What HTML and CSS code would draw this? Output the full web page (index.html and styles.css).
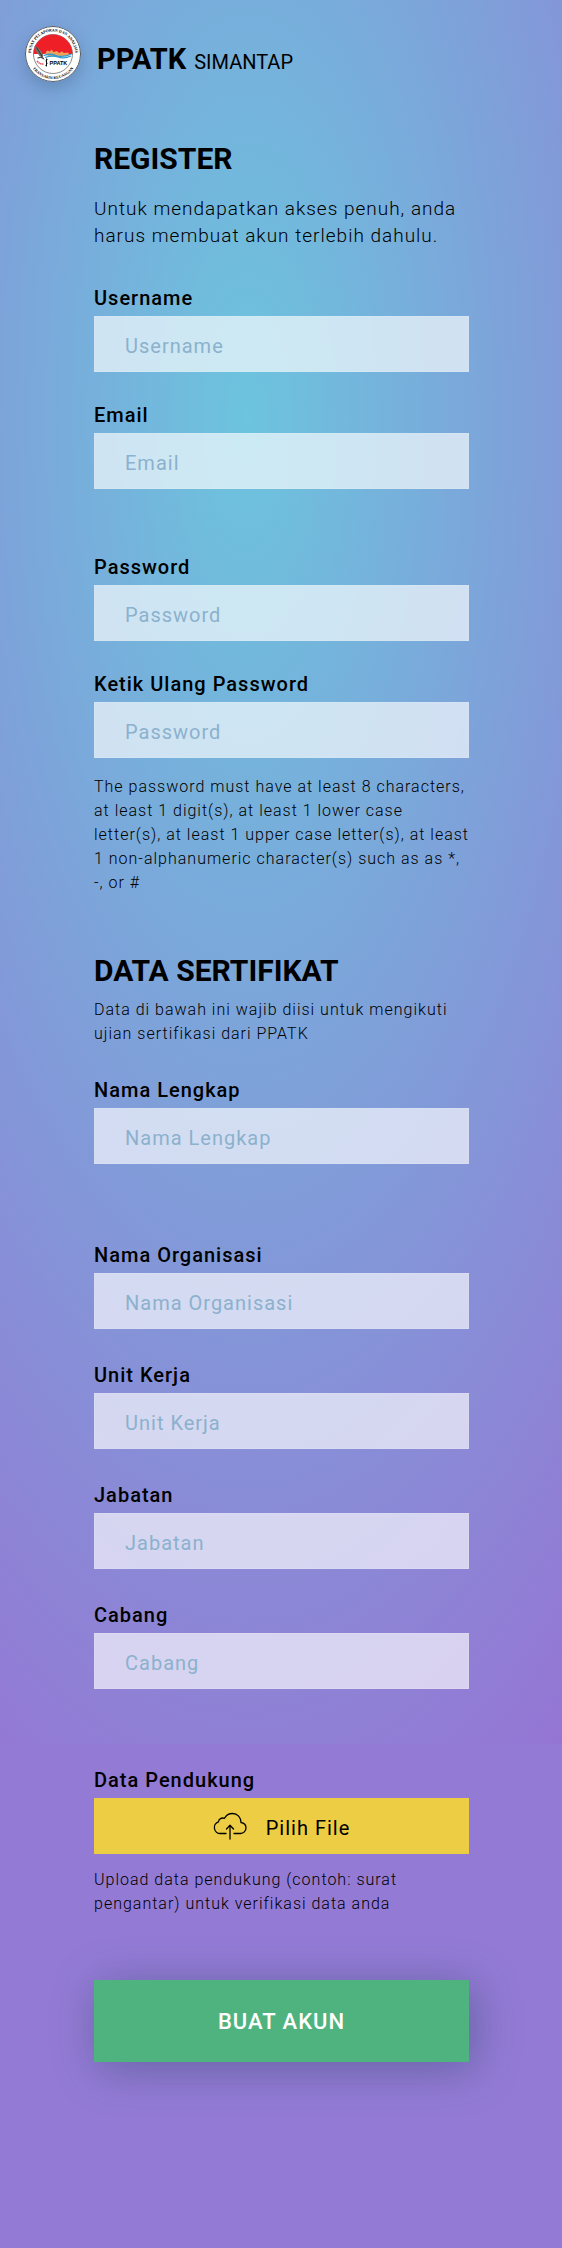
FILE: index.html
```html
<!DOCTYPE html>
<html lang="id">
<head>
<meta charset="utf-8">
<meta name="viewport" content="width=device-width, initial-scale=1">
<title>PPATK SIMANTAP</title>
<link rel="stylesheet" href="styles.css">
</head>
<body>
<header class="header">
  <svg class="logo" viewBox="0 0 112 112" aria-hidden="true">
    <defs>
      <path id="arc-top" d="M15 71 A44 44 0 1 1 97 71"/>
      <path id="arc-bottom" d="M9 73 A50 50 0 0 0 103 73"/>
    </defs>
    <circle cx="56" cy="56" r="55" fill="#fff" stroke="#555" stroke-width="2"/>
    <circle cx="56" cy="56" r="39" fill="#fff" stroke="#666" stroke-width="1.5"/>
    <path d="M17 56 A39 39 0 0 1 95 56 Z" fill="#ee1f27"/>
    <path d="M40 56 l4-7 6 2 3-4 4 5 7-2 4 4 6-3 4 3 8-1 3 5 -20 4 -22-2z" fill="#efa25b"/>
    <path d="M38 59 q12-5 24 0 t31-3 M40 63 q14-5 26-1 t26-2" fill="none" stroke="#329bd1" stroke-width="2.5"/>
    <path d="M19 40 q12 4 18 19 l-3 4 q-12-6-15-23z" fill="#77706b"/>
    <path d="M23 43 l15 24" stroke="#222" stroke-width="1.5"/>
    <path d="M25 64 q7-3 12 1" fill="none" stroke="#222" stroke-width="2"/>
    <path d="M24 70 q6 7 13 6" fill="none" stroke="#e34b52" stroke-width="3" stroke-dasharray="3 1"/>
    <path d="M45 67 q-5 1-2 5 t-2 7 M43 65 v16" fill="none" stroke="#111" stroke-width="2"/>
    <text class="logo-name" x="49" y="78">PPATK</text>
    <text class="logo-ring"><textPath href="#arc-top" startOffset="50%" text-anchor="middle">PUSAT PELAPORAN DAN ANALISIS</textPath></text>
    <text class="logo-ring"><textPath href="#arc-bottom" startOffset="50%" text-anchor="middle">TRANSAKSI KEUANGAN</textPath></text>
  </svg>
  <div class="brand"><strong class="brand-name">PPATK</strong><span class="brand-app">SIMANTAP</span></div>
</header>

<main class="main">
  <form class="form">
    <h1 class="title">REGISTER</h1>
    <p class="intro">Untuk mendapatkan akses penuh, anda harus membuat akun terlebih dahulu.</p>
    <div class="group group-account">
      <div class="field">
        <label class="label" for="username">Username</label>
        <input class="input" id="username" type="text" placeholder="Username">
      </div>
      <div class="field">
        <label class="label" for="email">Email</label>
        <input class="input" id="email" type="email" placeholder="Email">
      </div>
    </div>
    <div class="group group-password">
      <div class="field">
        <label class="label" for="password">Password</label>
        <input class="input" id="password" type="password" placeholder="Password">
      </div>
      <div class="field">
        <label class="label" for="password2">Ketik Ulang Password</label>
        <input class="input" id="password2" type="password" placeholder="Password">
      </div>
    </div>
    <p class="hint">The password must have at least 8 characters, at least 1 digit(s), at least 1 lower case letter(s), at least 1 upper case letter(s), at least 1 non-alphanumeric character(s) such as as *, -, or #</p>

    <h2 class="title title-section">DATA SERTIFIKAT</h2>
    <p class="hint hint-section">Data di bawah ini wajib diisi untuk mengikuti ujian sertifikasi dari PPATK</p>
    <div class="field">
      <label class="label" for="nama">Nama Lengkap</label>
      <input class="input" id="nama" type="text" placeholder="Nama Lengkap">
    </div>
    <div class="group group-organization">
      <div class="field">
        <label class="label" for="organisasi">Nama Organisasi</label>
        <input class="input" id="organisasi" type="text" placeholder="Nama Organisasi">
      </div>
      <div class="field">
        <label class="label" for="unit">Unit Kerja</label>
        <input class="input" id="unit" type="text" placeholder="Unit Kerja">
      </div>
      <div class="field">
        <label class="label" for="jabatan">Jabatan</label>
        <input class="input" id="jabatan" type="text" placeholder="Jabatan">
      </div>
      <div class="field">
        <label class="label" for="cabang">Cabang</label>
        <input class="input" id="cabang" type="text" placeholder="Cabang">
      </div>
    </div>
    <div class="field field-file">
      <label class="label" for="berkas">Data Pendukung</label>
      <div class="file">
        <svg class="file-icon" viewBox="0 0 34 28" aria-hidden="true">
          <path d="M13 21.500H7.500A6 6 0 0 1 5.500 9.800C5.800 7 8.500 5.300 11.500 6.300C13 3.500 16 1.500 19.500 1.500C24.500 1.500 28 5.500 28 10.500C31 11 33 13 33 16C33 19 30.500 21.500 27.500 21.500H21M17 27V13.500M13.500 17L17 13.300L20.500 17"/>
        </svg>
        <span class="file-text">Pilih File</span>
        <input class="file-input" id="berkas" type="file">
      </div>
    </div>
    <p class="hint hint-file">Upload data pendukung (contoh: surat pengantar) untuk verifikasi data anda</p>
    <button class="submit" type="submit">BUAT AKUN</button>
  </form>
</main>
</body>
</html>
```

FILE: styles.css
```css
* {
  box-sizing: border-box;
}

body {
  margin: 0;
  font-family: Roboto, "Liberation Sans", sans-serif;
  color: #000;
  background: #937bd5 radial-gradient(110% 88% at 44% 24%, #6cc4de, #9575d4) no-repeat;
  background-size: 100% 77.6%;
}

.header {
  display: flex;
  align-items: center;
  gap: 16px;
  padding: 26px 25px 0;
}

.logo {
  width: 56px;
  height: 56px;
  border-radius: 50%;
  box-shadow: 0 6px 16px rgba(30, 60, 84, 0.25);
}

.logo-ring {
  font: bold 8px "Liberation Serif", serif;
}

.logo-name {
  font: bold 11px "Liberation Sans", sans-serif;
}

.brand {
  display: flex;
  align-items: baseline;
  gap: 8px;
  padding-top: 12px;
  line-height: 32px;
}

.brand-name {
  font-size: 29px;
  font-weight: 700;
}

.brand-app {
  font-size: 20px;
}

.main {
  padding: 59px 93px 186px 94px;
}

.form {
  display: flex;
  flex-direction: column;
}

.title {
  margin: 0;
  font-size: 30px;
  font-weight: 700;
  line-height: 36px;
}

.title-section {
  margin-top: 58px;
}

.intro {
  margin: 18px 0 37px;
  font-size: 19px;
  font-weight: 300;
  line-height: 27px;
  letter-spacing: 1px;
}

.group {
  display: flex;
  flex-direction: column;
  gap: 31px;
}

.group-password {
  margin-top: 66px;
}

.group-organization {
  gap: 34px;
  margin-top: 79px;
}

.field {
  display: flex;
  flex-direction: column;
  gap: 6px;
}

.field-file {
  margin-top: 79px;
}

.label {
  font-size: 20px;
  font-weight: 500;
  line-height: 24px;
  letter-spacing: 1px;
}

.input {
  width: 100%;
  height: 56px;
  padding: 4px 30px 0;
  border: 1px solid rgba(255, 255, 255, 0.1);
  border-radius: 0;
  background: rgba(255, 255, 255, 0.65);
  color: #000;
  font-family: inherit;
  font-size: 20px;
  letter-spacing: 1px;
}

.input::placeholder {
  color: #8bb1cd;
  opacity: 1;
}

.hint {
  margin: 17px 0 0;
  font-size: 16px;
  font-weight: 300;
  line-height: 24px;
  letter-spacing: 1px;
}

.hint-section {
  margin: 9px 0 32px;
}

.hint-file {
  margin-top: 14px;
}

.file {
  position: relative;
  display: flex;
  align-items: center;
  justify-content: center;
  gap: 19px;
  height: 56px;
  background: #edcd43;
}

.file-icon {
  width: 34px;
  height: 28px;
  fill: none;
  stroke: #000;
  stroke-width: 1.3;
  stroke-linecap: round;
  stroke-linejoin: round;
}

.file-text {
  padding-top: 4px;
  font-size: 20px;
  letter-spacing: 1px;
}

.file-input {
  position: absolute;
  inset: 0;
  width: 100%;
  height: 100%;
  opacity: 0;
  cursor: pointer;
}

.submit {
  height: 82px;
  margin-top: 64px;
  border: 0;
  background: #4fb380;
  box-shadow: 5px 6px 45px rgba(30, 60, 84, 0.4);
  color: #fff;
  font-family: inherit;
  font-size: 22px;
  font-weight: 500;
  letter-spacing: 1px;
  cursor: pointer;
}
```
